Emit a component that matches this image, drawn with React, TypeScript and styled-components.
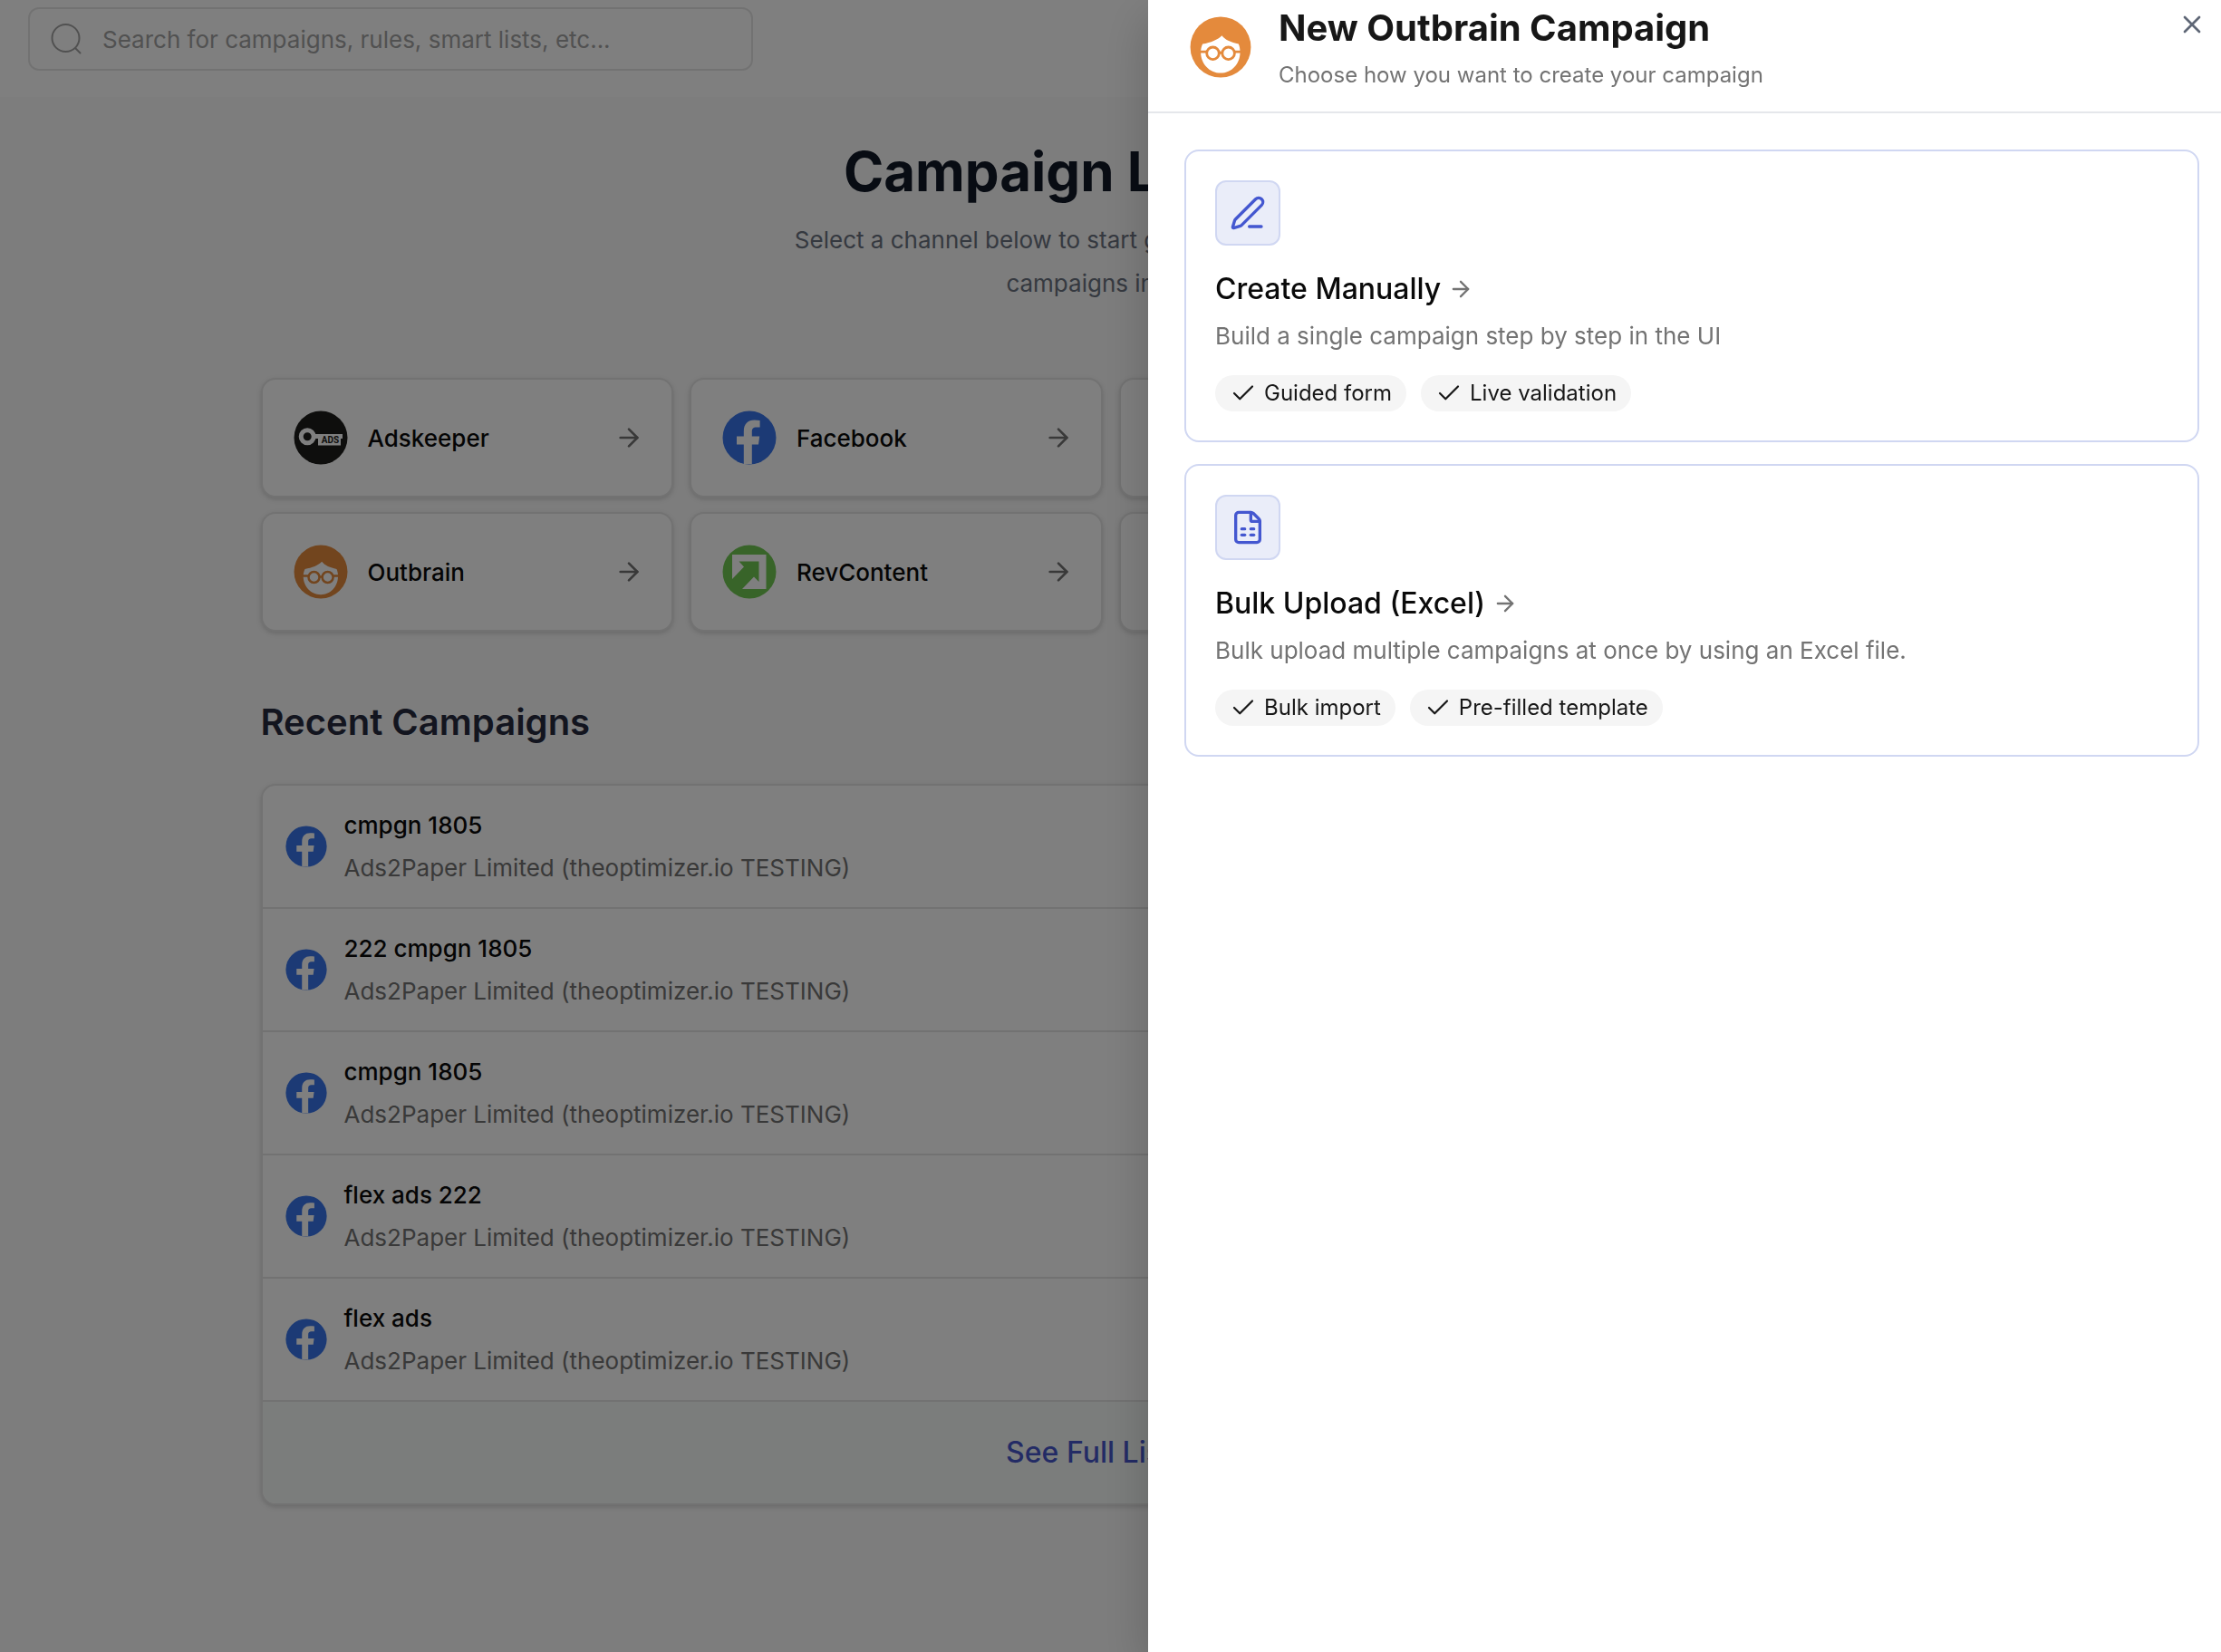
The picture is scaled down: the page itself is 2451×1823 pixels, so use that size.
import React from "react";
import styled, { createGlobalStyle } from "styled-components";
import { ArrowRight, Check, FileSpreadsheet, PenLine, X } from "lucide-react";

const GlobalStyle = createGlobalStyle`
  *, *::before, *::after { box-sizing: border-box; }
  html, body { margin: 0; }
  body {
    min-height: 100vh;
    background: #fafafa;
    color: #0a0a0a;
    font-family: Inter, "Liberation Sans", sans-serif;
    font-size: 26px;
    line-height: 39px;
    overflow: hidden;
  }
  h1, h2, h3, p, ul { margin: 0; padding: 0; }
  ul { list-style: none; }
  button, input { font: inherit; color: inherit; }
  svg { display: block; flex: none; }
`;

const Page = styled.div`
  min-height: 100vh;
`;

const TopBar = styled.header`
  padding: 8px 31px 29px;
  background: #ffffff;
`;

const SearchBox = styled.label`
  display: flex;
  align-items: center;
  gap: 22px;
  width: 100%;
  max-width: 800px;
  height: 70px;
  padding: 0 22px;
  border: 2px solid #e5e5e5;
  border-radius: 12px;
  color: #a3a3a3;
`;

const SearchInput = styled.input`
  flex: 1;
  min-width: 0;
  padding: 0;
  border: 0;
  outline: 0;
  background: transparent;
  &::placeholder { color: #a3a3a3; opacity: 1; }
`;

const Main = styled.main`
  max-width: 1876px;
  margin: 0 auto;
  padding: 46px 0 160px;
`;

const Intro = styled.section`
  display: flex;
  flex-direction: column;
  align-items: center;
  gap: 16px;
  text-align: center;
`;

const PageTitle = styled.h1`
  color: #111827;
  font-size: 60px;
  font-weight: 700;
  line-height: 72px;
`;

const Lead = styled.p`
  max-width: 720px;
  color: #6b7280;
  line-height: 48px;
`;

const ChannelGrid = styled.ul`
  display: grid;
  grid-template-columns: repeat(4, minmax(0, 1fr));
  gap: 16px 18px;
  margin-top: 80px;
`;

const ChannelButton = styled.button`
  display: flex;
  align-items: center;
  gap: 22px;
  width: 100%;
  padding: 34px 31px 34px 34px;
  border: 2px solid #e5e5e5;
  border-radius: 16px;
  background: #ffffff;
  box-shadow: 0 2px 6px rgba(0, 0, 0, 0.1), 0 2px 4px rgba(0, 0, 0, 0.06);
  font-weight: 500;
  text-align: left;
  cursor: pointer;
`;

const ChannelName = styled.span`
  flex: 1;
`;

const MutedArrow = styled(ArrowRight)`
  color: #737373;
`;

const SectionTitle = styled.h2`
  margin: 71px 0 39px;
  color: #262a3f;
  font-size: 40px;
  font-weight: 600;
  line-height: 58px;
`;

const RecentCard = styled.section`
  overflow: hidden;
  border: 2px solid #e5e5e5;
  border-radius: 16px;
  background: #ffffff;
  box-shadow: 0 2px 6px rgba(0, 0, 0, 0.1), 0 2px 4px rgba(0, 0, 0, 0.06);
`;

const RecentRow = styled.li`
  display: flex;
  align-items: center;
  gap: 19px;
  padding: 20px 25px;
  border-bottom: 2px solid #e5e5e5;
  line-height: 47px;
`;

const CampaignName = styled.p`
  font-weight: 500;
`;

const Account = styled.p`
  color: #737373;
`;

const FullListLink = styled.a`
  display: flex;
  align-items: center;
  justify-content: center;
  gap: 12px;
  padding: 32px;
  background: #f7fbf9;
  color: #4757cb;
  font-size: 32px;
  font-weight: 500;
  line-height: 48px;
  text-decoration: none;
`;

const Overlay = styled.div`
  position: fixed;
  inset: 0;
  display: flex;
  justify-content: flex-end;
  background: rgba(0, 0, 0, 0.5);
`;

const Drawer = styled.aside`
  width: 1184px;
  max-width: 100%;
  height: 100%;
  overflow: auto;
  background: #ffffff;
  box-shadow: 0 20px 50px rgba(0, 0, 0, 0.2);
`;

const DrawerHeader = styled.header`
  display: flex;
  align-items: center;
  gap: 30px;
  padding: 3px 7px 22px 46px;
  border-bottom: 2px solid #e5e7eb;
`;

const DrawerHeading = styled.div`
  flex: 1;
`;

const DrawerTitle = styled.h2`
  margin-bottom: 6px;
  color: #171717;
  font-size: 40px;
  font-weight: 700;
  line-height: 56px;
`;

const DrawerSubtitle = styled.p`
  color: #737373;
  font-size: 24px;
  line-height: 36px;
`;

const CloseButton = styled.button`
  align-self: flex-start;
  padding: 8px 9px;
  border: 0;
  background: transparent;
  color: #5f6776;
  cursor: pointer;
`;

const OptionList = styled.div`
  display: flex;
  flex-direction: column;
  gap: 24px;
  padding: 40px 24px 40px 40px;
`;

const OptionCard = styled.button`
  display: flex;
  flex-direction: column;
  align-items: flex-start;
  padding: 32px;
  border: 2px solid #d0d7f2;
  border-radius: 16px;
  background: #ffffff;
  text-align: left;
  cursor: pointer;
`;

const OptionIcon = styled.span`
  padding: 14px;
  border: 2px solid #d0d7f2;
  border-radius: 12px;
  background: #eaedf9;
  color: #4457d0;
`;

const OptionTitle = styled.span`
  display: flex;
  align-items: center;
  gap: 8px;
  margin: 24px 0 8px;
  font-size: 32px;
  font-weight: 500;
  line-height: 48px;
`;

const OptionText = styled.span`
  color: #737373;
`;

const TagRow = styled.span`
  display: flex;
  flex-wrap: wrap;
  gap: 16px;
  margin-top: 24px;
`;

const Tag = styled.span`
  display: flex;
  align-items: center;
  gap: 8px;
  padding: 2px 16px;
  border-radius: 20px;
  background: #f5f5f5;
  color: #171717;
  font-size: 24px;
  line-height: 36px;
`;

type LogoProps = { size: number };

const SearchIcon = () => (
  <svg width="36" height="36" viewBox="0 0 36 36" fill="none" stroke="currentColor" strokeWidth="2" strokeLinecap="round" aria-hidden="true">
    <circle cx="17.5" cy="17" r="15" />
    <path d="M28 28l5.5 5.5" />
  </svg>
);

const OutbrainLogo = ({ size }: LogoProps) => (
  <svg width={size} height={size} viewBox="0 0 60 60" aria-hidden="true">
    <circle cx="30" cy="30" r="29.5" fill="#e48a3c" />
    <path
      d="M31.2 18.7c3.5 4.500 9 6.500 16.300 8.200 1 2.300 1.500 5 1.500 8.100C49 46 41 55.200 30 55.200S10.700 46 10.700 35c0-3.100.7-5.800 1.800-8.100 8-1.400 14.700-4 18.700-8.200z"
      fill="#fff"
    />
    <g fill="none" stroke="#e48a3c" strokeWidth="2.5">
      <circle cx="22.500" cy="36" r="6" />
      <circle cx="37.600" cy="36" r="6" />
      <path d="M10 34.500h6.700M28.300 35.500h3.500M43.400 34.500H50" />
    </g>
  </svg>
);

const FacebookLogo = ({ size }: LogoProps) => (
  <svg width={size} height={size} viewBox="0 0 60 60" aria-hidden="true">
    <circle cx="30" cy="30" r="29.5" fill="#3875ea" />
    <path
      d="M23.800 59V37.600H16v-9h7.800V23c0-8 4.500-12.400 11.700-12.400 2.300 0 4.200.2 6.100.5v7.500h-4c-3.600 0-4.800 1.800-4.800 4.700v5.300h8.400l-1.200 9h-7.200V59z"
      fill="#fff"
    />
  </svg>
);

const AdskeeperLogo = ({ size }: LogoProps) => (
  <svg width={size} height={size} viewBox="0 0 60 60" aria-hidden="true">
    <circle cx="30" cy="30" r="29.5" fill="#1c1c1a" />
    <path d="M22 26h32v5h-2v7.500H27V31h-5z" fill="#fff" />
    <circle cx="15.2" cy="28.700" r="7" fill="#1c1c1a" stroke="#fff" strokeWidth="5" />
    <text x="40.500" y="36" fill="#1c1c1a" fontFamily="Roboto, sans-serif" fontSize="10" fontWeight="700" textAnchor="middle">ADS</text>
  </svg>
);

const RevContentLogo = ({ size }: LogoProps) => (
  <svg width={size} height={size} viewBox="0 0 60 60" aria-hidden="true">
    <circle cx="30" cy="30" r="29.5" fill="#70c852" />
    <path d="M11 11h37.500v38H22l13-13.500 5.500 5.500V18.500h-22l5.500 6L11 38z" fill="#fff" />
  </svg>
);

const RingLogo = ({ size }: LogoProps) => (
  <svg width={size} height={size} viewBox="0 0 60 60" aria-hidden="true">
    <circle cx="30" cy="30" r="29.5" fill="#1f5fd6" />
    <circle cx="30" cy="30" r="12" fill="none" stroke="#fff" strokeWidth="5" />
  </svg>
);

const channels = [
  { name: "Adskeeper", Logo: AdskeeperLogo },
  { name: "Facebook", Logo: FacebookLogo },
  { name: "MGID", Logo: RingLogo },
  { name: "NewsBreak", Logo: RingLogo },
  { name: "Outbrain", Logo: OutbrainLogo },
  { name: "RevContent", Logo: RevContentLogo },
  { name: "Taboola", Logo: RingLogo },
  { name: "TikTok", Logo: RingLogo },
];

const recent = ["cmpgn 1805", "222 cmpgn 1805", "cmpgn 1805", "flex ads 222", "flex ads"];

const options = [
  {
    title: "Create Manually",
    text: "Build a single campaign step by step in the UI",
    tags: ["Guided form", "Live validation"],
    Icon: PenLine,
  },
  {
    title: "Bulk Upload (Excel)",
    text: "Bulk upload multiple campaigns at once by using an Excel file.",
    tags: ["Bulk import", "Pre-filled template"],
    Icon: FileSpreadsheet,
  },
];

export default function App() {
  return (
    <>
      <GlobalStyle />
      <Page>
        <TopBar>
          <SearchBox>
            <SearchIcon />
            <SearchInput
              type="search"
              aria-label="Search"
              placeholder="Search for campaigns, rules, smart lists, etc..."
            />
          </SearchBox>
        </TopBar>
        <Main>
          <Intro>
            <PageTitle>Campaign Launcher</PageTitle>
            <Lead>
              Select a channel below to start growing and launch more campaigns in bulk.
            </Lead>
          </Intro>
          <ChannelGrid>
            {channels.map(({ name, Logo }) => (
              <li key={name}>
                <ChannelButton type="button">
                  <Logo size={60} />
                  <ChannelName>{name}</ChannelName>
                  <MutedArrow size={32} />
                </ChannelButton>
              </li>
            ))}
          </ChannelGrid>
          <SectionTitle>Recent Campaigns</SectionTitle>
          <RecentCard>
            <ul>
              {recent.map((name, index) => (
                <RecentRow key={index}>
                  <FacebookLogo size={46} />
                  <div>
                    <CampaignName>{name}</CampaignName>
                    <Account>Ads2Paper Limited (theoptimizer.io TESTING)</Account>
                  </div>
                </RecentRow>
              ))}
            </ul>
            <FullListLink href="#campaigns">
              See Full List
              <ArrowRight size={36} />
            </FullListLink>
          </RecentCard>
        </Main>
      </Page>
      <Overlay>
        <Drawer role="dialog" aria-modal="true" aria-labelledby="drawer-title">
          <DrawerHeader>
            <OutbrainLogo size={68} />
            <DrawerHeading>
              <DrawerTitle id="drawer-title">New Outbrain Campaign</DrawerTitle>
              <DrawerSubtitle>Choose how you want to create your campaign</DrawerSubtitle>
            </DrawerHeading>
            <CloseButton type="button" aria-label="Close">
              <X size={32} />
            </CloseButton>
          </DrawerHeader>
          <OptionList>
            {options.map(({ title, text, tags, Icon }) => (
              <OptionCard key={title} type="button">
                <OptionIcon>
                  <Icon size={40} />
                </OptionIcon>
                <OptionTitle>
                  {title}
                  <MutedArrow size={28} />
                </OptionTitle>
                <OptionText>{text}</OptionText>
                <TagRow>
                  {tags.map((tag) => (
                    <Tag key={tag}>
                      <Check size={30} strokeWidth={1.75} />
                      {tag}
                    </Tag>
                  ))}
                </TagRow>
              </OptionCard>
            ))}
          </OptionList>
        </Drawer>
      </Overlay>
    </>
  );
}
